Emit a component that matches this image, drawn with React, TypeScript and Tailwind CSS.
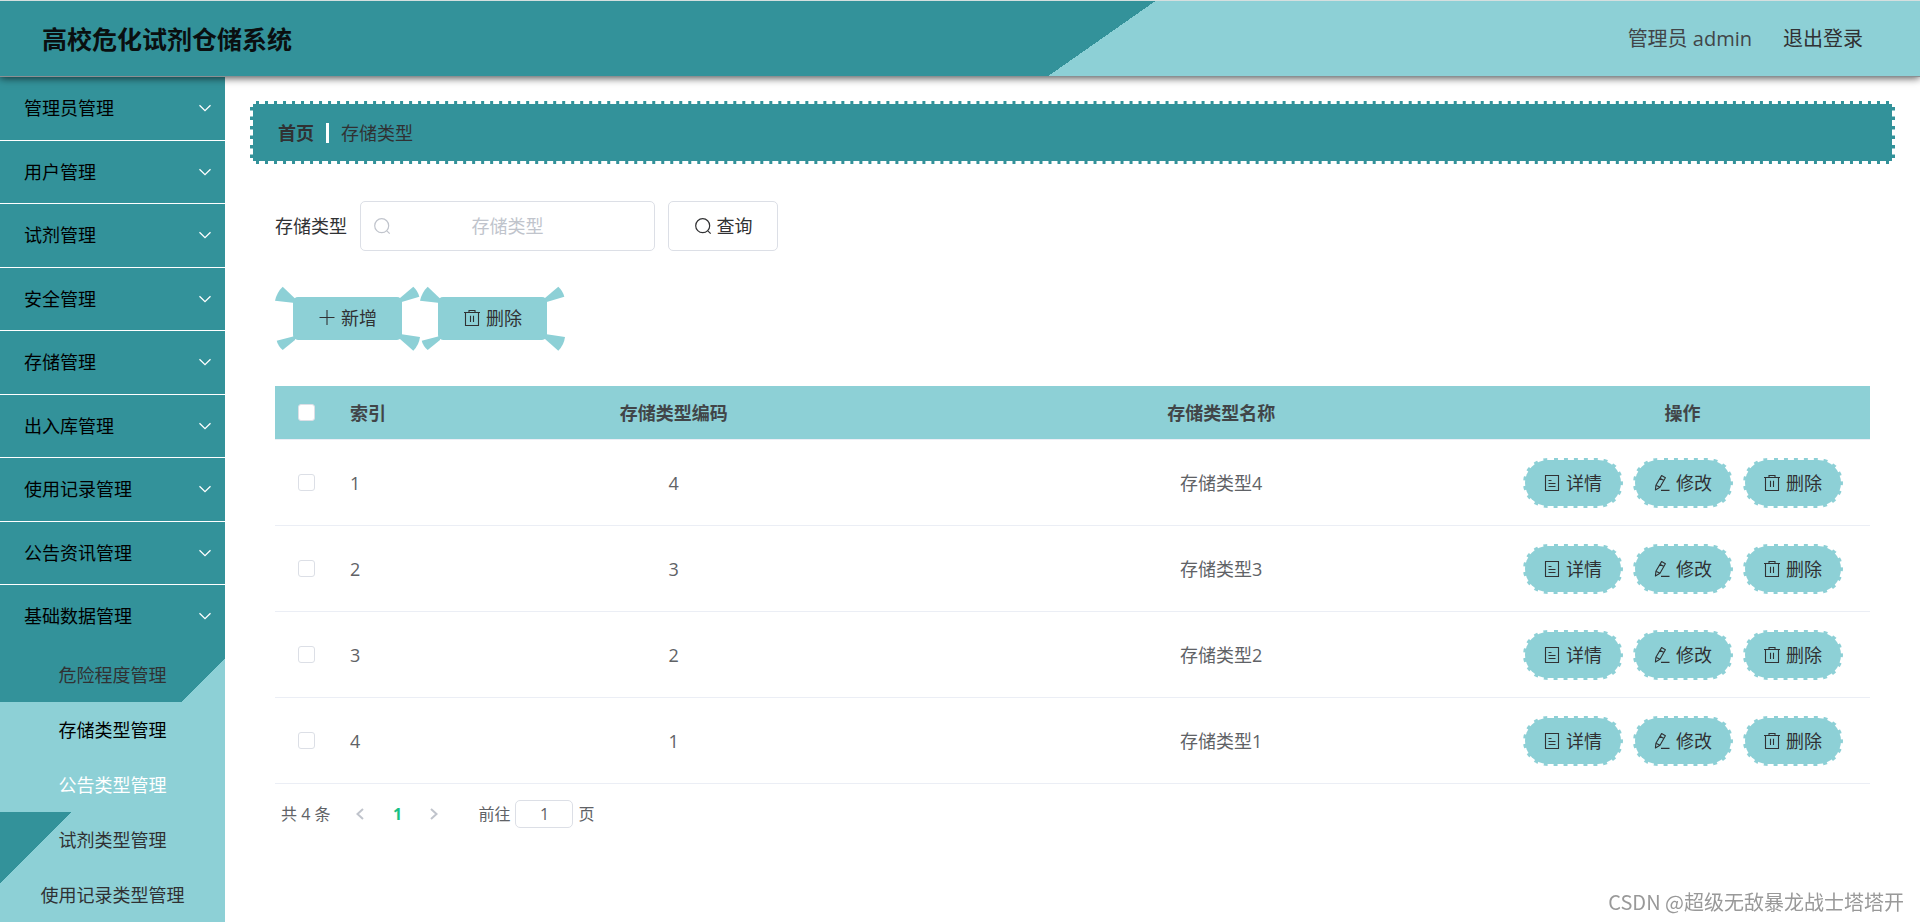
import { useState } from "react";
import type { ReactNode } from "react";

const menus = [
  "管理员管理",
  "用户管理",
  "试剂管理",
  "安全管理",
  "存储管理",
  "出入库管理",
  "使用记录管理",
  "公告资讯管理",
];

const subMenus = [
  { label: "危险程度管理", className: "text-[#303133]" },
  { label: "存储类型管理", className: "bg-[#8dd0d6] text-black" },
  { label: "公告类型管理", className: "bg-[#8dd0d6] text-white" },
  { label: "试剂类型管理", className: "text-[#303133]" },
  { label: "使用记录类型管理", className: "text-[#303133]" },
];

const rows = [
  { id: 1, code: 4, name: "存储类型4" },
  { id: 2, code: 3, name: "存储类型3" },
  { id: 3, code: 2, name: "存储类型2" },
  { id: 4, code: 1, name: "存储类型1" },
];

type IconProps = { className?: string };

const ArrowDown = () => (
  <svg className="h-[14px] w-[14px] text-white" viewBox="0 0 14 14" fill="none" stroke="currentColor" strokeWidth="1.3" aria-hidden="true">
    <path d="M1.5 4.2 7 9.6l5.5-5.4" />
  </svg>
);

const SearchIcon = ({ className = "" }: IconProps) => (
  <svg className={`h-[18px] w-[18px] ${className}`} viewBox="0 0 18 18" fill="none" stroke="currentColor" strokeWidth="1.2" aria-hidden="true">
    <circle cx="8.7" cy="8.7" r="7" />
    <path d="m13.8 13.8 2.9 2.9" />
  </svg>
);

const PlusIcon = () => (
  <svg className="h-[18px] w-[18px]" viewBox="0 0 18 18" fill="none" stroke="currentColor" strokeWidth="1.1" aria-hidden="true">
    <path d="M1.5 8.5h15M9 1v15" />
  </svg>
);

const TrashIcon = () => (
  <svg className="h-[18px] w-[18px]" viewBox="0 0 18 18" fill="none" stroke="currentColor" strokeWidth="1.1" aria-hidden="true">
    <path d="M1 3.5h16M2.5 3.5v13h13v-13M6 3.5v-2h6v2M7.5 6.7v6.3M10.5 6.7v6.3" />
  </svg>
);

const DetailIcon = () => (
  <svg className="h-[18px] w-[18px]" viewBox="0 0 18 18" fill="none" stroke="currentColor" strokeWidth="1.1" aria-hidden="true">
    <path d="M2.5 1.5h13v15h-13zM5.5 6.5h3M5.5 9.5h7M5.5 12.5h7" />
  </svg>
);

const EditIcon = () => (
  <svg className="h-[18px] w-[18px]" viewBox="0 0 18 18" fill="none" stroke="currentColor" strokeWidth="1.1" strokeLinejoin="round" aria-hidden="true">
    <path d="M8.6 1.6 12.4 3.8 7 13.2 2.4 16 2.9 11.2zM7 4.3l3.9 2.2M2.9 11.2 7 13.2M8 16.4h8.5" />
  </svg>
);

function WingButton({ icon, children }: { icon: ReactNode; children: ReactNode }) {
  return (
    <button type="button" className="relative flex h-[65px] w-[145px] items-center justify-center gap-[5px] pb-[2px] text-[#303133]">
      <svg className="absolute inset-0 h-full w-full text-[#8dd0d6]" viewBox="0 0 145 65" fill="currentColor" aria-hidden="true">
        <rect x="18" y="11" width="109" height="43" rx="5" />
        <path d="M7.7.7 20 12.5V17L0 14.7Q2 6 7.7.7Z" />
        <path d="M138.3.7 125 12V16.5L144.3 10.7Q143 5 138.3.7Z" />
        <path d="M1.7 54.7 20 50V54L7.7 64Q3 60 1.7 54.7Z" />
        <path d="M125 48 145 51Q144 59 138.3 64.7L125 53Z" />
      </svg>
      <span className="relative">{icon}</span>
      <span className="relative">{children}</span>
    </button>
  );
}

function PillButton({ icon, children }: { icon: ReactNode; children: ReactNode }) {
  return (
    <button
      type="button"
      className="flex h-[50px] w-[100px] items-center justify-center gap-[5px] rounded-[25px] border-2 border-dashed border-white bg-[#8dd0d6] text-[#303133]"
    >
      {icon}
      {children}
    </button>
  );
}

const checkboxClass =
  "block h-[17px] w-[17px] appearance-none rounded-[3px] border border-[#dcdfe6] bg-white checked:bg-[#33929a]";

export default function App() {
  const [selected, setSelected] = useState<number[]>([]);

  const toggleRow = (id: number) => {
    setSelected((prev) =>
      prev.includes(id) ? prev.filter((item) => item !== id) : [...prev, id]
    );
  };

  const toggleAll = () => {
    setSelected(selected.length === rows.length ? [] : rows.map((row) => row.id));
  };

  return (
    <div className="flex min-h-screen flex-col bg-white font-['Open_Sans','Noto_Sans_CJK_SC',sans-serif] text-lg leading-6">
      <header className="relative flex h-[77px] items-center justify-between border-y border-t-[#d5dfdf] border-b-[#8b8f92] bg-[linear-gradient(145deg,#33929a_57%,#8dd0d6_57%)] pr-[57px] pl-[42px] shadow-[0_1px_8px_rgba(0,0,0,0.7)]">
        <h1 className="text-[25px] font-bold text-[#0a0f10]">高校危化试剂仓储系统</h1>
        <div className="flex gap-[31px] text-xl text-[#414548]">
          <span>管理员 admin</span>
          <a href="#logout" className="text-[#303133]">退出登录</a>
        </div>
      </header>

      <div className="flex flex-1">
        {/* Sidebar */}
        <nav className="flex w-[225px] shrink-0 flex-col bg-[#33929a] text-black">
          <div className="grid h-[508px] auto-rows-fr">
            {menus.map((menu) => (
              <button
                key={menu}
                type="button"
                className="flex items-center justify-between border-b border-white pr-[13px] pl-6"
              >
                {menu}
                <ArrowDown />
              </button>
            ))}
          </div>
          <button type="button" className="flex h-[62px] items-center justify-between pr-[13px] pl-6">
            基础数据管理
            <ArrowDown />
          </button>
          <ul className="flex-1 bg-[linear-gradient(135deg,#33929a_167px,#8dd0d6_167px)]">
            {subMenus.map((item) => (
              <li key={item.label}>
                <a href="#menu" className={`flex h-[55px] items-center justify-center ${item.className}`}>
                  {item.label}
                </a>
              </li>
            ))}
          </ul>
        </nav>

        {/* Content */}
        <main className="min-w-0 flex-1 px-[25px] pt-6">
          <div className="flex h-[63px] items-center gap-3 border-3 border-dashed border-white bg-[#33929a] px-[25px] text-[#303133]">
            <a href="#home" className="font-bold">首页</a>
            <span className="h-5 w-[3px] bg-white" />
            <span>存储类型</span>
          </div>

          <div className="px-[25px]">
            <form className="mt-[37px] flex items-center" onSubmit={(e) => e.preventDefault()}>
              <label htmlFor="storageType" className="text-[#303133]">存储类型</label>
              <div className="relative ml-[13px]">
                <SearchIcon className="absolute top-4 left-[13px] text-[#c0c4cc]" />
                <input
                  id="storageType"
                  type="text"
                  placeholder="存储类型"
                  className="h-[50px] w-[295px] rounded-[5px] border border-[#dcdfe6] px-[38px] text-center text-[#606266] placeholder:text-[#c0c4cc] focus:outline-none"
                />
              </div>
              <button
                type="submit"
                className="ml-[13px] flex h-[50px] w-[110px] items-center justify-center gap-[5px] rounded-[5px] border border-[#dcdfe6] text-[#303133]"
              >
                <SearchIcon />
                查询
              </button>
            </form>

            <div className="mt-[35px] flex">
              <WingButton icon={<PlusIcon />}>新增</WingButton>
              <WingButton icon={<TrashIcon />}>删除</WingButton>
            </div>

            <table className="mt-[35px] w-full table-fixed border-separate border-spacing-0 text-[#606266]">
              <colgroup>
                <col className="w-[62px]" />
                <col className="w-[63px]" />
                <col />
                <col />
                <col className="w-[375px]" />
              </colgroup>
              <thead className="bg-[#8dd0d6] text-[#414548]">
                <tr>
                  <th className="h-[54px] border-b border-[#ebeef5]">
                    <input
                      type="checkbox"
                      aria-label="全选"
                      className={`mx-auto ${checkboxClass}`}
                      checked={selected.length === rows.length}
                      onChange={toggleAll}
                    />
                  </th>
                  <th className="border-b border-[#ebeef5] pl-[13px] text-left whitespace-nowrap">索引</th>
                  <th className="border-b border-[#ebeef5]">存储类型编码</th>
                  <th className="border-b border-[#ebeef5]">存储类型名称</th>
                  <th className="border-b border-[#ebeef5]">操作</th>
                </tr>
              </thead>
              <tbody>
                {rows.map((row) => (
                  <tr key={row.id}>
                    <td className="h-[86px] border-b border-[#ebeef5]">
                      <input
                        type="checkbox"
                        aria-label={row.name}
                        className={`mx-auto ${checkboxClass}`}
                        checked={selected.includes(row.id)}
                        onChange={() => toggleRow(row.id)}
                      />
                    </td>
                    <td className="border-b border-[#ebeef5] pl-[13px]">{row.id}</td>
                    <td className="border-b border-[#ebeef5] text-center">{row.code}</td>
                    <td className="border-b border-[#ebeef5] text-center">{row.name}</td>
                    <td className="border-b border-[#ebeef5]">
                      <div className="flex justify-center gap-[10px]">
                        <PillButton icon={<DetailIcon />}>详情</PillButton>
                        <PillButton icon={<EditIcon />}>修改</PillButton>
                        <PillButton icon={<TrashIcon />}>删除</PillButton>
                      </div>
                    </td>
                  </tr>
                ))}
              </tbody>
            </table>

            {/* Pagination */}
            <div className="mt-4 flex h-7 items-center pl-[6px] text-base text-[#606266]">
              <span>共 4 条</span>
              <button type="button" aria-label="上一页" className="ml-[22px] text-[#c0c4cc]">
                <svg className="h-4 w-4" viewBox="0 0 16 16" fill="none" stroke="currentColor" strokeWidth="2">
                  <path d="M11 3 5.5 8l5.5 5" />
                </svg>
              </button>
              <button type="button" className="w-[58px] text-center font-bold text-[#18c184]">1</button>
              <button type="button" aria-label="下一页" className="text-[#c0c4cc]">
                <svg className="h-4 w-4" viewBox="0 0 16 16" fill="none" stroke="currentColor" strokeWidth="2">
                  <path d="m5 3 5.5 5L5 13" />
                </svg>
              </button>
              <label htmlFor="pageNumber" className="ml-9">前往</label>
              <input
                id="pageNumber"
                type="text"
                defaultValue="1"
                className="mx-[5px] h-7 w-[58px] rounded-[5px] border border-[#dcdfe6] text-center focus:outline-none"
              />
              <span>页</span>
            </div>
          </div>
        </main>
      </div>

      <div className="fixed right-4 bottom-[6px] font-['Noto_Sans_CJK_SC',sans-serif] text-xl text-[#999]">
        CSDN @超级无敌暴龙战士塔塔开
      </div>
    </div>
  );
}
